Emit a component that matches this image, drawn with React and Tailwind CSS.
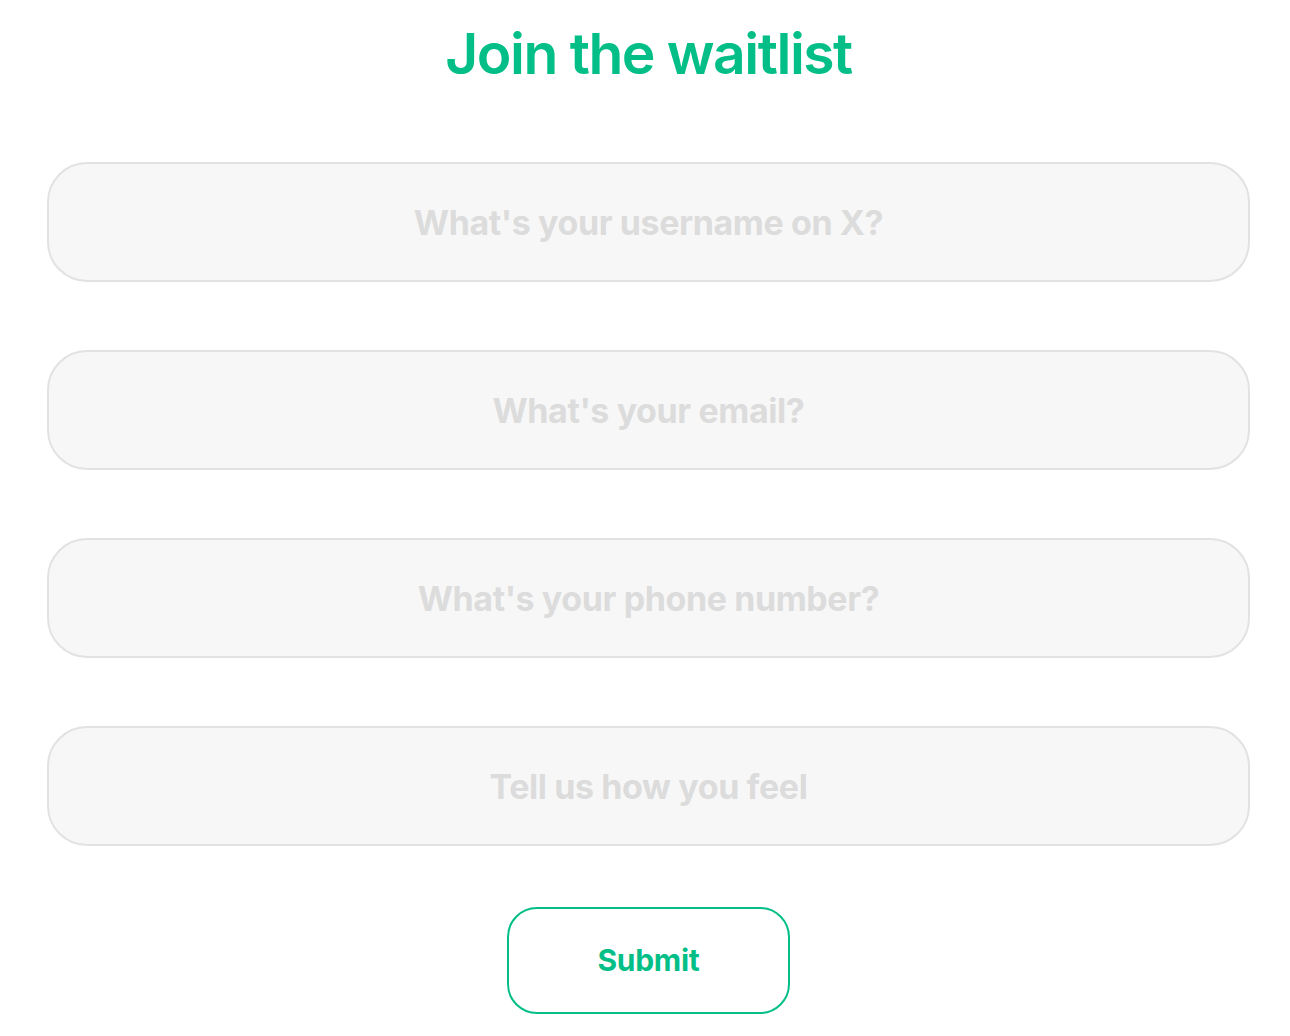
import { useState } from "react";

const fields = [
  { name: "username", placeholder: "What's your username on X?" },
  { name: "email", placeholder: "What's your email?" },
  { name: "phone", placeholder: "What's your phone number?" },
  { name: "feeling", placeholder: "Tell us how you feel" },
];

export default function App() {
  const [values, setValues] = useState({});

  const handleChange = (e) =>
    setValues((prev) => ({ ...prev, [e.target.name]: e.target.value }));

  return (
    <main className="min-h-screen bg-white font-['Inter',sans-serif]">
      <form
        onSubmit={(e) => e.preventDefault()}
        className="flex flex-col items-center pl-[47px] pr-[40px] pt-[18px]"
      >
        <h1 className="text-[57px] leading-[72px] font-semibold tracking-[-1.5px] text-[#03bf87]">
          Join the waitlist
        </h1>

        <div className="mt-[72px] flex w-full flex-col gap-[68px]">
          {fields.map((f) => (
            <input
              key={f.name}
              name={f.name}
              value={values[f.name] || ""}
              onChange={handleChange}
              placeholder={f.placeholder}
              className="h-[120px] w-full rounded-[40px] border-2 border-[#e2e2e2] bg-[#f7f7f7] text-center text-[34px] font-bold tracking-[-0.4px] text-[#333] outline-none placeholder:text-[#dcdcdc]"
            />
          ))}
        </div>

        <button
          type="submit"
          className="mt-[61px] h-[107px] w-[283px] rounded-[30px] border-2 border-[#03bf87] bg-white text-[30px] font-bold tracking-[-0.3px] text-[#03bf87]"
        >
          Submit
        </button>
      </form>
    </main>
  );
}
